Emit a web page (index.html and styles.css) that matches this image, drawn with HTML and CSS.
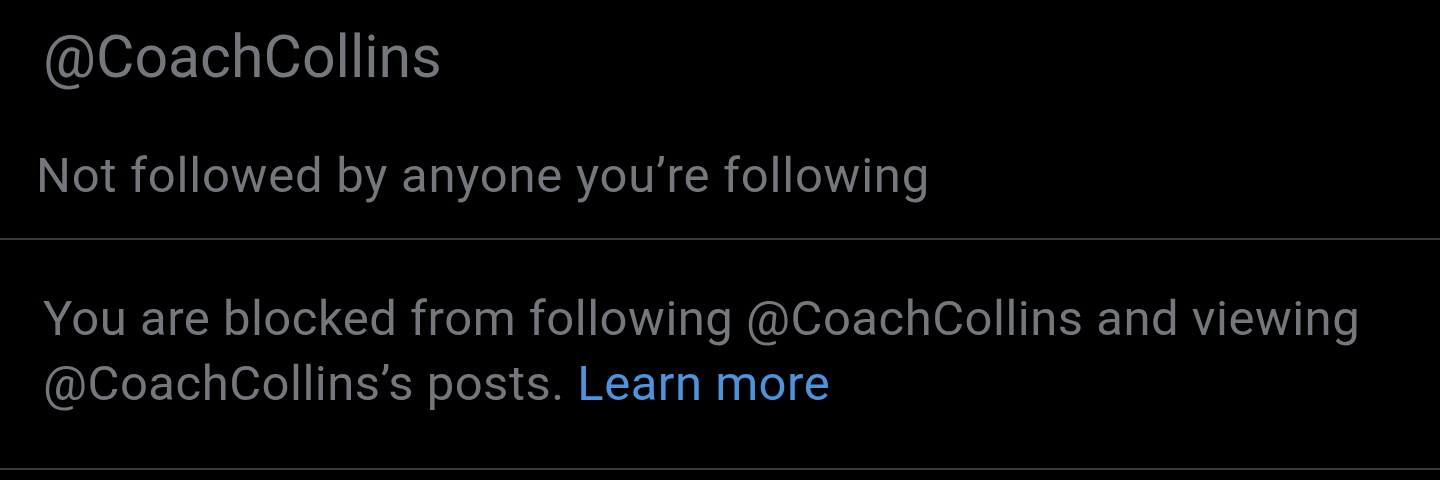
FILE: index.html
```html
<!DOCTYPE html>
<html lang="en">
<head>
<meta charset="utf-8">
<title>Profile</title>
<link rel="stylesheet" href="styles.css">
</head>
<body>
<main class="page">
  <section class="profile">
    <div class="handle">@CoachCollins</div>
    <div class="followers">Not followed by anyone you’re following</div>
  </section>
  <section class="notice">
    <p class="notice-text">You are blocked from following @CoachCollins and viewing @CoachCollins’s posts. <a class="link" href="#">Learn more</a></p>
  </section>
</main>
</body>
</html>
```
FILE: styles.css
```css
html, body {
  margin: 0;
  padding: 0;
  background: #000;
}
.page {
  width: 1440px;
  height: 480px;
  overflow: hidden;
  font-family: Roboto, "Liberation Sans", sans-serif;
  color: #74787d;
}
.profile {
  padding: 14px 0 0 0;
  height: 240px;
  box-sizing: border-box;
  border-bottom: 2px solid #3b3b3b;
}
.handle {
  padding-left: 43px;
  font-size: 59px;
  line-height: 86px;
}
.followers {
  padding-left: 36px;
  margin-top: 46px;
  font-size: 49px;
  line-height: 60px;
  letter-spacing: 0.75px;
}
.notice {
  height: 230px;
  box-sizing: border-box;
  padding: 46px 43px 0 43px;
  border-bottom: 2px solid #3b3b3b;
}
.notice-text {
  margin: 0;
  font-size: 49px;
  line-height: 65px;
  letter-spacing: 0.5px;
}
.link {
  color: #4b95e0;
  text-decoration: none;
}
```
